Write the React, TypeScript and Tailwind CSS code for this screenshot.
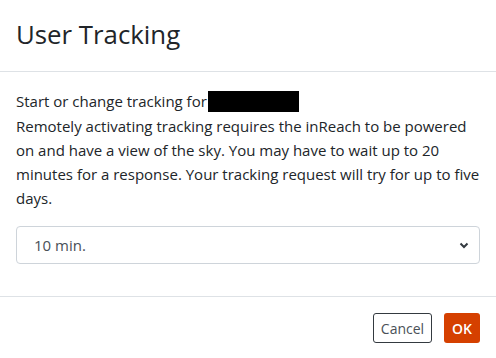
export default function App() {
  return (
    <div className="w-[496px] h-[358px] bg-white text-[#212529] font-['Open_Sans',sans-serif]">
      <div className="h-[72px] px-4 flex items-center border-b border-[#dee2e6]">
        <h5 className="text-[25.8px] leading-none font-normal mt-[-2px]">User Tracking</h5>
      </div>
      <div className="px-4 pt-[17px] pb-[32px] text-[15px] leading-[24px]">
        <p className="flex items-center mb-[1px]">
          Start or change tracking for
          <span className="inline-block ml-[1px] w-[91px] h-[21px] bg-black" />
        </p>
        <p>
          Remotely activating tracking requires the inReach to be powered on and have a view of the sky. You may have to
          wait up to 20 minutes for a response. Your tracking request will try for up to five days.
        </p>
        <div className="mt-[16px] relative h-[38px] border border-[#ced4da] rounded-[4px] flex items-center pl-[17px] text-[#495057]">
          10 min.
          <svg className="absolute right-[10px] top-[15px]" width="10" height="7" viewBox="0 0 10 7">
            <path d="M1.5 1.5 L5 5 L8.5 1.5" fill="none" stroke="#343a40" strokeWidth="2" />
          </svg>
        </div>
      </div>
      <div className="border-t border-[#dee2e6] h-[63px] px-4 flex items-center justify-end gap-[12px]">
        <button className="h-[30px] w-[59px] border border-[#343a40] rounded-[3px] text-[14px] text-[#495057]">Cancel</button>
        <button className="h-[30px] w-[36px] bg-[#d54000] rounded-[3px] text-[14px] text-white font-semibold">OK</button>
      </div>
    </div>
  );
}
